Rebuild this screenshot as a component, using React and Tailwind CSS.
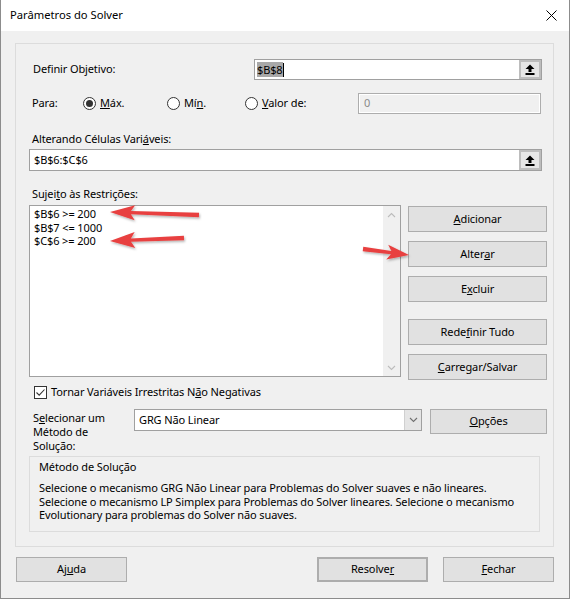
import React from "react";

function arrowPts(tx, ty, px, py, L, W, s1, s2) {
  const dx = px - tx, dy = py - ty;
  const len = Math.hypot(dx, dy);
  const ux = dx / len, uy = dy / len;
  const nx = -uy, ny = ux;
  const bx = px - ux * L, by = py - uy * L;
  const jx = bx + ux * 4, jy = by + uy * 4;
  const pts = [
    [tx + nx * s1, ty + ny * s1],
    [jx + nx * s2, jy + ny * s2],
    [bx + nx * W, by + ny * W],
    [px, py],
    [bx - nx * W, by - ny * W],
    [jx - nx * s2, jy - ny * s2],
    [tx - nx * s1, ty - ny * s1],
  ];
  return pts.map((p) => p.map((v) => v.toFixed(1)).join(",")).join(" ");
}

const Btn = ({ children, className = "" }) => (
  <div
    className={`flex items-center justify-center bg-[#e1e1e1] border border-[#adadad] ${className}`}
  >
    {children}
  </div>
);

const Radio = ({ checked }) => (
  <span className="w-[13px] h-[13px] shrink-0 rounded-full border border-[#333333] bg-white flex items-center justify-center">
    {checked && <span className="w-[7px] h-[7px] rounded-full bg-[#333333]" />}
  </span>
);

const UploadBtn = () => (
  <div className="w-[22px] h-full shrink-0 border-2 border-[#bdbdbd] bg-[#e6e6e6] flex items-center justify-center">
    <svg width="10" height="11" viewBox="0 0 10 11">
      <path d="M5 0.5 L9.5 5 H6.5 V8 H3.5 V5 H0.5 Z" fill="#000" />
      <rect x="0.5" y="9" width="9" height="2" fill="#000" />
    </svg>
  </div>
);

const Chevron = ({ up, color = "#bcbcbc" }) => (
  <svg width="9" height="6" viewBox="0 0 9 6">
    <path
      d={up ? "M1 5 L4.5 1.5 L8 5" : "M1 1 L4.5 4.5 L8 1"}
      stroke={color}
      strokeWidth="1.1"
      fill="none"
    />
  </svg>
);

export default function App() {
  return (
    <div className="relative w-[570px] h-[599px] bg-[#f0f0f0] font-['Noto_Sans',sans-serif] text-[11px] tracking-[-0.12px] text-black border-x border-b border-[#8c8c8c] overflow-hidden">
      {/* Title bar */}
      <div className="h-[31px] bg-white flex items-center justify-between pl-[9px] pr-[12px]">
        <span className="text-[11.2px] tracking-normal">Parâmetros do Solver</span>
        <svg width="11" height="11" viewBox="0 0 11 11">
          <path d="M0.5 0.5 L10.5 10.5 M10.5 0.5 L0.5 10.5" stroke="#000" strokeWidth="1" />
        </svg>
      </div>

      {/* Panel */}
      <div className="ml-[14px] mt-[12px] w-[539px] h-[504px] border border-[#dcdcdc] pl-[13px] flex flex-col">
        {/* Definir objetivo */}
        <div className="mt-[15px] h-[21px] flex items-center justify-between pr-[11px]">
          <span className="ml-[4px]">
            Definir Ob<u>j</u>etivo:
          </span>
          <div className="w-[288px] h-[21px] border border-[#a0a0a0] bg-white flex items-center">
            <div className="flex-1 flex items-center pl-[2px]">
              <span className="bg-[#a8a8a8] leading-[15px]">$B$8</span>
              <span className="w-[1px] h-[14px] bg-black" />
            </div>
            <UploadBtn />
          </div>
        </div>

        {/* Para */}
        <div className="mt-[13px] h-[21px] flex items-center">
          <span className="w-[54px] pl-[3px]">Para:</span>
          <div className="w-[84px] flex items-center gap-[4px]">
            <Radio checked />
            <span>
              <u>M</u>áx.
            </span>
          </div>
          <div className="w-[78px] flex items-center gap-[4px]">
            <Radio />
            <span>
              Mí<u>n</u>.
            </span>
          </div>
          <div className="w-[113px] flex items-center gap-[4px]">
            <Radio />
            <span>
              <u>V</u>alor de:
            </span>
          </div>
          <div className="w-[183px] h-[21px] border border-[#adadad] bg-white p-[1px]">
            <div className="h-full bg-[#f0f0f0] pl-[4px] text-[#8a8a8a] leading-[15px]">0</div>
          </div>
        </div>

        {/* Alterando */}
        <div className="mt-[18px] h-[14px] leading-[14px] pl-[3px]">
          Alterando Células Vari<u>á</u>veis:
        </div>
        <div className="mt-[3px] w-[513px] h-[22px] border border-[#a0a0a0] bg-white flex items-center">
          <span className="flex-1 pl-[4px]">$B$6:$C$6</span>
          <UploadBtn />
        </div>

        {/* Sujeito */}
        <div className="mt-[16px] h-[14px] leading-[14px] pl-[3px]">
          Sujei<u>t</u>o às Restrições:
        </div>
        <div className="mt-[4px] h-[175px] flex">
          <div className="w-[372px] h-[172px] border border-[#a0a0a0] bg-white flex">
            <div className="flex-1 pl-[4px] pt-[1px] leading-[13.5px]">
              <div>$B$6 &gt;= 200</div>
              <div>$B$7 &lt;= 1000</div>
              <div>$C$6 &gt;= 200</div>
            </div>
            <div className="w-[17px] bg-[#f0f0f0] flex flex-col items-center justify-between pt-[6px] pb-[5px]">
              <Chevron up />
              <Chevron />
            </div>
          </div>
          <div className="ml-[7px] w-[139px] flex flex-col">
            <Btn className="mt-[1px] h-[26px]">
              <span>
                <u>A</u>dicionar
              </span>
            </Btn>
            <Btn className="mt-[9px] h-[26px]">
              <span>
                Alter<u>a</u>r
              </span>
            </Btn>
            <Btn className="mt-[9px] h-[26px]">
              <span>
                E<u>x</u>cluir
              </span>
            </Btn>
            <Btn className="mt-[17px] h-[26px]">
              <span>
                Rede<u>f</u>inir Tudo
              </span>
            </Btn>
            <Btn className="mt-[9px] h-[26px]">
              <span>
                <u>C</u>arregar/Salvar
              </span>
            </Btn>
          </div>
        </div>

        {/* Checkbox */}
        <div className="mt-[5px] h-[14px] flex items-center">
          <span className="ml-[5px] w-[13px] h-[13px] border border-[#333333] bg-white flex items-center justify-center">
            <svg width="11" height="11" viewBox="0 0 11 11">
              <path d="M1.5 5.5 L4.2 8.2 L9.5 2.5" stroke="#333" strokeWidth="1.1" fill="none" />
            </svg>
          </span>
          <span className="ml-[4px]">
            Tornar Variáveis Irrestritas N<u>ã</u>o Negativas
          </span>
        </div>

        {/* Select method */}
        <div className="mt-[10px] h-[44px] flex items-start">
          <div className="w-[105px] pt-[2px] pl-[4px] leading-[14px]">
            <div>
              S<u>e</u>lecionar um
            </div>
            <div>Método de</div>
            <div>Solução:</div>
          </div>
          <div className="w-[288px] h-[22px] border border-[#a0a0a0] bg-white flex">
            <span className="flex-1 pl-[4px] flex items-center">GRG Não Linear</span>
            <div className="w-[17px] h-full bg-[#e5e5e5] border-l border-[#d0d0d0] flex items-center justify-center">
              <Chevron color="#707070" />
            </div>
          </div>
          <Btn className="ml-[8px] w-[117px] h-[25px]">
            <span>
              <u>O</u>pções
            </span>
          </Btn>
        </div>

        {/* Método box */}
        <div className="mt-[3px] w-[511px] h-[76px] border border-[#dcdcdc] px-[9px] pt-[3px]">
          <div className="leading-[14px]">Método de Solução</div>
          <div className="mt-[7px] leading-[13.5px]">
            Selecione o mecanismo GRG Não Linear para Problemas do Solver suaves e não lineares.
            <br />
            Selecione o mecanismo LP Simplex para Problemas do Solver lineares. Selecione o mecanismo
            <br />
            Evolutionary para problemas do Solver não suaves.
          </div>
        </div>
      </div>

      {/* Bottom buttons */}
      <div className="mt-[10px] flex">
        <Btn className="ml-[15px] w-[111px] h-[25px]">
          <span>
            Aj<u>u</u>da
          </span>
        </Btn>
        <Btn className="ml-[190px] w-[111px] h-[25px] border-2 border-[#0078d7]">
          <span>
            Resolve<u>r</u>
          </span>
        </Btn>
        <Btn className="ml-[15px] w-[111px] h-[25px]">
          <span>
            <u>F</u>echar
          </span>
        </Btn>
      </div>

      {/* Annotation arrows */}
      <svg className="absolute left-0 top-0 pointer-events-none" width="570" height="599" viewBox="0 0 570 599">
        <defs>
          <filter id="sh" x="-20%" y="-50%" width="140%" height="200%">
            <feDropShadow dx="1" dy="1.5" stdDeviation="1" floodColor="#000" floodOpacity="0.3" />
          </filter>
        </defs>
        <g fill="#e8403f" filter="url(#sh)">
          <polygon points={arrowPts(198, 215, 109, 212, 25, 7.5, 2.3, 1.6)} />
          <polygon points={arrowPts(183, 238, 109, 241, 25, 8, 2.3, 1.6)} />
          <polygon points={arrowPts(362, 249, 408, 255, 22, 7.5, 2.3, 1.6)} />
        </g>
      </svg>
    </div>
  );
}
